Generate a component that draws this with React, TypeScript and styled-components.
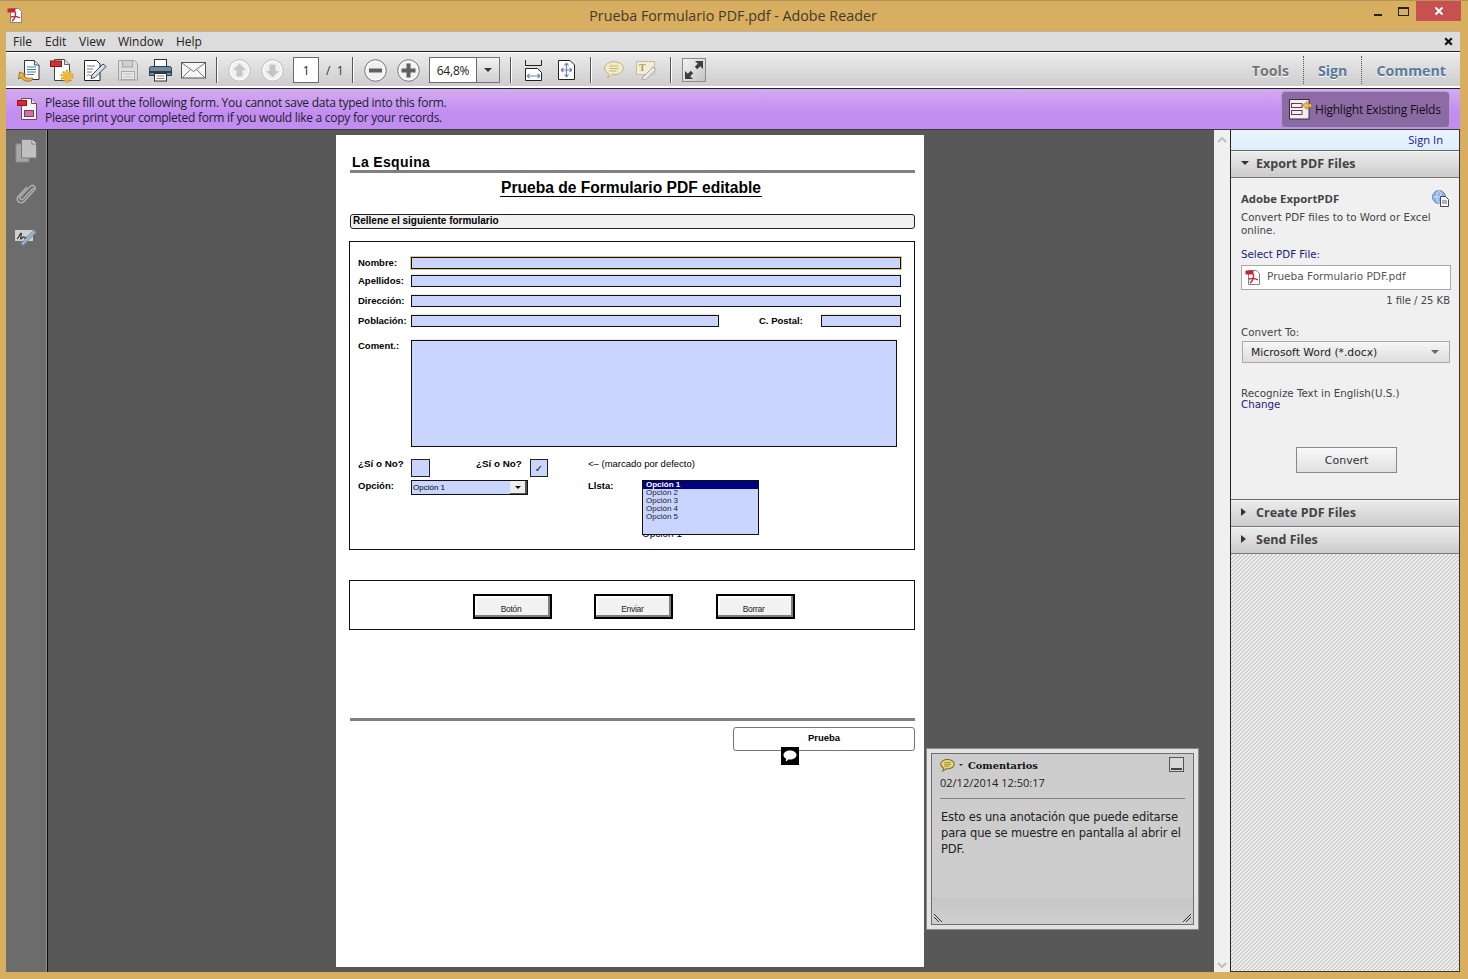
import React from 'react';
import { styled, createGlobalStyle } from 'styled-components';

const ui = `"Open Sans", "Noto Sans", sans-serif`;
const pdf = `"Liberation Sans", Arial, sans-serif`;
const panel = `"DejaVu Sans", Verdana, sans-serif`;

const Global = createGlobalStyle`
    html, body { margin: 0; padding: 0; background: #d8ae60; }
    * { box-sizing: border-box; }
`;

const Win = styled.div`
    width: 1468px;
    height: 979px;
    overflow: hidden;
    display: flex;
    flex-direction: column;
    background: #d8ae60;
    font-family: ${ui};
`;

const TitleBar = styled.div`
    height: 31px;
    flex: none;
    display: grid;
    grid-template-columns: 1fr auto 1fr;
    border-top: 1px solid #b3935a;
    color: #45392a;
    font-size: 14.3px;
`;

const AppIcon = styled.div`
    padding: 6px 0 0 7px;
`;

const Title = styled.div`
    padding: 5px 2px 0 0;
    line-height: 20px;
`;

const WinControls = styled.div`
    display: flex;
    justify-content: flex-end;
    align-items: flex-start;
    padding-right: 7px;
`;

const WinBtn = styled.div<{ $w: number; $red?: boolean }>`
    width: ${(p) => p.$w}px;
    height: 20px;
    display: flex;
    align-items: center;
    justify-content: center;
    background: ${(p) => (p.$red ? '#c75050' : 'transparent')};
`;

const Body = styled.div`
    flex: 1;
    min-height: 0;
    margin: 0 8px 7px 6px;
    display: flex;
    flex-direction: column;
`;

const MenuBar = styled.div`
    height: 20px;
    flex: none;
    background: #dcdcdc;
    border-top: 1px solid #c2b59a;
    display: flex;
    align-items: center;
    padding: 0 7px;
    font-size: 12px;
    color: #222;
`;

const MenuItem = styled.span<{ $w: number }>`
    width: ${(p) => p.$w}px;
`;

const MenuClose = styled.span`
    margin-left: auto;
    display: flex;
`;

const ToolBar = styled.div`
    height: 38px;
    flex: none;
    display: flex;
    align-items: center;
    padding-left: 6px;
    border-top: 1px solid #222;
    border-bottom: 1px solid #222;
    box-shadow: inset 0 1px 0 #fff, inset 0 -2px 0 #fff;
    background: linear-gradient(#ececec, #cbcbcb);
`;

const Slot = styled.div`
    width: 33px;
    height: 26px;
    flex: none;
    display: flex;
    align-items: center;
    justify-content: center;
`;

const Sep = styled.div<{ $l?: number; $r?: number }>`
    width: 1px;
    height: 26px;
    flex: none;
    background: #555;
    box-shadow: 1px 0 0 #fff;
    margin: 0 ${(p) => p.$r ?? 6}px 0 ${(p) => p.$l ?? 6}px;
`;

const NumBox = styled.div<{ $w: number; $l: number }>`
    width: ${(p) => p.$w}px;
    height: 26px;
    margin-left: ${(p) => p.$l}px;
    background: #fff;
    border: 1px solid #6c6c6c;
    display: flex;
    align-items: center;
    justify-content: center;
    font-size: 12px;
    letter-spacing: -0.2px;
    color: #222;
`;

const PageCount = styled.span`
    margin-left: 7px;
    width: 17px;
    font-size: 12px;
    color: #333;
    white-space: nowrap;
`;

const ZoomDrop = styled.div`
    width: 23px;
    height: 26px;
    border: 1px solid #777;
    border-left: 0;
    background: linear-gradient(#f2f2f2, #cfcfcf);
    display: flex;
    align-items: center;
    justify-content: center;
`;

const Caret = styled.span<{ $size?: number; $dir?: 'down' | 'right'; $color?: string }>`
    display: inline-block;
    width: 0;
    height: 0;
    flex: none;
    ${(p) => {
        const s = p.$size ?? 4;
        const c = p.$color ?? '#333';
        return p.$dir === 'right'
            ? `border-top: ${s}px solid transparent; border-bottom: ${s}px solid transparent; border-left: ${s + 1}px solid ${c};`
            : `border-left: ${s}px solid transparent; border-right: ${s}px solid transparent; border-top: ${s}px solid ${c};`;
    }}
`;

const FullBtn = styled.div`
    width: 24px;
    height: 24px;
    margin-left: 5px;
    border: 1px solid #8a8a8a;
    background: linear-gradient(135deg, #f4f4f4, #c4c4c4);
    display: flex;
    align-items: center;
    justify-content: center;
`;

const Tabs = styled.div`
    margin-left: auto;
    height: 28px;
    display: flex;
    align-items: center;
    padding-right: 14px;
`;

const Tab = styled.div<{ $color: string; $first?: boolean }>`
    height: 28px;
    line-height: 29px;
    padding-left: ${(p) => (p.$first ? 0 : 14)}px;
    padding-right: 14px;
    border-left: ${(p) => (p.$first ? 0 : 1)}px dotted #555;
    font-size: 14.2px;
    font-weight: 700;
    color: ${(p) => p.$color};
    text-shadow: 0 1px 0 #fff;
    &:last-child { padding-right: 0; }
`;

const FormBar = styled.div`
    height: 41px;
    flex: none;
    display: flex;
    align-items: center;
    padding: 0 10px 0 11px;
    background: linear-gradient(#d4abf0, #c28df1 60%);
    border-bottom: 1px solid #3c3c3c;
`;

const FormBarText = styled.div`
    margin-left: 6px;
    padding-top: 2px;
    font-size: 12px;
    line-height: 15px;
    color: #1d1d2c;
    letter-spacing: -0.27px;
`;

const HighlightBtn = styled.div`
    margin-left: auto;
    width: 169px;
    height: 37px;
    display: flex;
    align-items: center;
    gap: 3px;
    padding-left: 7px;
    border: 1px solid #b79ad2;
    border-radius: 4px;
    background: linear-gradient(#8f6ba4, #8a6aa4);
    font-size: 12px;
    color: #111;
    white-space: nowrap;
    letter-spacing: -0.22px;
`;

const Main = styled.div`
    flex: 1;
    min-height: 0;
    display: flex;
`;

const Rail = styled.div`
    width: 42px;
    flex: none;
    display: flex;
    flex-direction: column;
    align-items: center;
    gap: 19px;
    padding: 9px 2px 0 0;
    background: #6c6c6c;
    border-right: 1px solid #0c0c0c;
    box-shadow: inset -1px 0 0 #8e8e8e;
`;

const Viewport = styled.div`
    position: relative;
    flex: 1;
    background: #585858;
`;

const Page = styled.div`
    width: 588px;
    height: 832px;
    margin: 5px 0 0 288px;
    padding: 19px 0 0 14px;
    background: #fff;
    color: #000;
    font-family: ${pdf};
`;

const Brand = styled.div`
    height: 16px;
    line-height: 16px;
    padding-left: 2px;
    font-size: 14px;
    font-weight: 700;
    letter-spacing: 0.35px;
`;

const Rule = styled.div<{ $top?: number }>`
    width: 565px;
    height: 3px;
    margin-top: ${(p) => p.$top ?? 0}px;
    background: #808080;
`;

const FormTitleRow = styled.div`
    width: 565px;
    margin-top: 4px;
    text-align: center;
    padding-right: 3px;
`;

const FormTitle = styled.span`
    display: inline-block;
    height: 20px;
    line-height: 21px;
    border-bottom: 1px solid #000;
    padding: 0 1px;
    font-size: 15.6px;
    font-weight: 700;
`;

const Section = styled.div`
    width: 565px;
    height: 15px;
    margin-top: 17px;
    padding-left: 2px;
    border: 1px solid #222;
    border-radius: 3px;
    background: #f0f0f0;
    font-size: 10px;
    font-weight: 700;
    line-height: 12px;
`;

const FormBox = styled.div`
    width: 566px;
    margin: 12px 0 0 -1px;
    padding: 15px 0 14px 8px;
    border: 1px solid #111;
`;

const Row = styled.div<{ $top?: number; $h?: number }>`
    display: flex;
    align-items: center;
    height: ${(p) => p.$h ?? 12}px;
    margin-top: ${(p) => p.$top ?? 0}px;
`;

const TopRow = styled(Row)`
    align-items: flex-start;
`;

const Label = styled.div<{ $w?: number; $l?: number }>`
    width: ${(p) => p.$w ?? 53}px;
    margin-left: ${(p) => p.$l ?? 0}px;
    flex: none;
    font-size: 9.5px;
    font-weight: 700;
    line-height: 12px;
`;

const CheckLabel = styled(Label)`
    margin-top: -1px;
    font-size: 9.8px;
`;

const Field = styled.div<{ $w: number; $h?: number; $focus?: boolean }>`
    width: ${(p) => p.$w}px;
    height: ${(p) => p.$h ?? 12}px;
    flex: none;
    background: #c9d5ff;
    border: 1px solid #111;
    box-shadow: ${(p) => (p.$focus ? '0 0 0 1px #efc27a' : '0 -1px 0 #f7e7cf')};
`;

const Check = styled.div<{ $w: number }>`
    width: ${(p) => p.$w}px;
    height: 18px;
    flex: none;
    background: #c9d5ff;
    border: 1px solid #222;
    display: flex;
    align-items: center;
    justify-content: center;
    font-family: "DejaVu Sans", sans-serif;
    font-size: 10px;
    color: #111;
`;

const Note = styled.div`
    margin: -1px 0 0 40px;
    font-size: 9.5px;
    line-height: 12px;
`;

const Combo = styled.div`
    width: 117px;
    height: 15px;
    flex: none;
    display: flex;
    background: #c9d5ff;
    border: 1px solid #111;
    font-size: 8px;
    line-height: 14px;
    padding-left: 1px;
`;

const ComboText = styled.span`
    flex: 1;
`;

const ComboBtn = styled.span`
    width: 17px;
    background: #eee;
    border-right: 2px solid #555;
    border-bottom: 1px solid #555;
    display: flex;
    align-items: center;
    justify-content: center;
`;

const ListWrap = styled.div`
    position: relative;
    flex: none;
`;

const ListBehind = styled.div`
    position: absolute;
    left: 0;
    top: 49px;
    font-size: 10px;
    line-height: 10px;
    white-space: nowrap;
`;

const ListBox = styled.div`
    position: relative;
    width: 117px;
    height: 55px;
    background: #c9d5ff;
    border: 1px solid #111;
    font-size: 8px;
    line-height: 8px;
`;

const ListItem = styled.div<{ $active?: boolean }>`
    height: 8px;
    padding-left: 3px;
    white-space: nowrap;
    background: ${(p) => (p.$active ? '#000080' : 'transparent')};
    color: ${(p) => (p.$active ? '#fff' : '#222')};
    font-weight: ${(p) => (p.$active ? 700 : 400)};
`;

const ButtonBox = styled.div`
    width: 566px;
    height: 50px;
    margin: 30px 0 0 -1px;
    padding: 13px 0 0 123px;
    border: 1px solid #111;
    display: flex;
    align-items: flex-start;
    gap: 42.3px;
`;

const FormButton = styled.div`
    width: 79px;
    height: 25px;
    padding-right: 3px;
    border: 2px solid #000;
    box-shadow: inset -2px -2px 0 #808080, inset 2px 2px 0 #fff;
    background: #f2f2f2;
    text-align: center;
    font-size: 8.5px;
    letter-spacing: -0.3px;
    line-height: 27px;
    color: #222;
`;

const PruebaBox = styled.div`
    position: relative;
    width: 182px;
    height: 24px;
    margin: 6px 0 0 383px;
    border: 1px solid #777;
    border-radius: 3px;
    text-align: center;
    font-size: 9.5px;
    font-weight: 700;
    line-height: 19px;
`;

const NoteMark = styled.div`
    position: absolute;
    left: 47px;
    top: 19px;
    width: 18px;
    height: 18px;
    background: #000;
    display: flex;
    align-items: center;
    justify-content: center;
`;

const Popup = styled.div`
    position: absolute;
    left: 878px;
    top: 618px;
    width: 273px;
    height: 182px;
    padding: 4px;
    background: #e2e2e2;
    border: 1px solid #8c8c8c;
`;

const PopupInner = styled.div`
    position: relative;
    height: 100%;
    padding: 3px 8px 0 8px;
    background: linear-gradient(#cdcdcd 85%, #c6c6c6 85%, #cfcfcf);
    border: 1px solid #6e6e6e;
    color: #222;
    font-family: ${panel};
`;

const PopupHead = styled.div`
    display: flex;
    align-items: center;
    height: 16px;
    gap: 4px;
`;

const PopupTitle = styled.span`
    margin-left: 1px;
    font-family: "DejaVu Serif", ${panel};
    font-size: 9.8px;
    font-weight: 700;
    color: #111;
`;

const MinBtn = styled.div`
    position: absolute;
    right: 9px;
    top: 3px;
    width: 15px;
    height: 15px;
    border: 1px solid #555;
    background: #d8d8d8;
    display: flex;
    align-items: flex-end;
    justify-content: center;
    padding-bottom: 1px;
    &::after {
        content: '';
        width: 11px;
        height: 2px;
        background: #444;
    }
`;

const PopupDate = styled.div`
    margin-top: 2px;
    font-family: ${ui};
    font-size: 11px;
    line-height: 15px;
    padding-bottom: 8px;
    border-bottom: 1px solid #808080;
`;

const PopupText = styled.div`
    margin: 10px -6px 0 0;
    padding-left: 1px;
    font-size: 11.5px;
    line-height: 16px;
    letter-spacing: -0.15px;
`;

const Grip = styled.svg<{ $side: 'left' | 'right' }>`
    position: absolute;
    bottom: 1px;
    ${(p) => p.$side}: 1px;
`;

const Scroll = styled.div`
    width: 16px;
    flex: none;
    background: #f0f0f0;
    display: flex;
    flex-direction: column;
    justify-content: space-between;
    align-items: center;
    padding: 6px 0 3px;
`;

const Side = styled.div`
    width: 230px;
    flex: none;
    display: flex;
    flex-direction: column;
    border-left: 1px solid #222;
    border-right: 1px solid #333;
    border-bottom: 1px solid #333;
    font-family: ${panel};
    color: #444;
`;

const SignIn = styled.div`
    height: 21px;
    flex: none;
    background: linear-gradient(#eaf4fd, #dfeefb);
    border-bottom: 1px solid #666;
    text-align: right;
    padding-right: 16px;
    font-family: ${ui};
    font-size: 11.2px;
    line-height: 19px;
    color: #1515a0;
`;

const PanelHead = styled.div<{ $gap: number }>`
    height: 27px;
    flex: none;
    display: flex;
    align-items: center;
    gap: ${(p) => p.$gap}px;
    padding: 0 0 2px 10px;
    background: linear-gradient(#ececec, #cccccc);
    border-bottom: 1px solid #777;
    box-shadow: inset 0 1px 0 #f6f6f6;
    font-family: ${ui};
    font-size: 12.5px;
    font-weight: 700;
    color: #444;
`;

const PanelBody = styled.div`
    height: 322px;
    flex: none;
    background: #f0f0f0;
    border-bottom: 1px solid #666;
    padding: 12px 9px 0 10px;
    font-size: 10.3px;
`;

const ExportTitle = styled.div`
    display: flex;
    justify-content: space-between;
    align-items: flex-start;
    height: 18px;
    padding-right: 1px;
    font-family: ${ui};
    font-size: 11.4px;
    font-weight: 700;
    line-height: 17px;
`;

const Desc = styled.div`
    margin-top: 3px;
    line-height: 13px;
    width: 205px;
`;

const SelectLabel = styled.div`
    margin-top: 11px;
    line-height: 13px;
    color: #1b1b80;
`;

const FileBox = styled.div`
    display: flex;
    align-items: flex-start;
    gap: 6px;
    width: 210px;
    height: 25px;
    margin-top: 4px;
    padding: 3px 0 0 3px;
    background: #fff;
    border: 1px solid #aaa;
    font-size: 10.5px;
    line-height: 15px;
    color: #555;
`;

const FileMeta = styled.div`
    margin-top: 3px;
    text-align: right;
    font-size: 10px;
    line-height: 15px;
`;

const ConvertLabel = styled.div`
    margin-top: 17px;
    line-height: 14px;
`;

const Dropdown = styled.div`
    width: 208px;
    height: 22px;
    margin: 2px 0 0 1px;
    display: flex;
    align-items: center;
    justify-content: space-between;
    padding: 0 10px 0 8px;
    border: 1px solid #aaa;
    background: linear-gradient(#f6f6f6, #dedede);
    color: #222;
    font-size: 10.75px;
`;

const Recognize = styled.div`
    margin-top: 25px;
    line-height: 11px;
`;

const ChangeLink = styled.div`
    color: #1b1b80;
    line-height: 11px;
`;

const ConvertBtn = styled.div`
    width: 101px;
    height: 26px;
    margin: 37px 0 0 55px;
    border: 1px solid #888;
    background: linear-gradient(#f8f8f8, #e0e0e0);
    text-align: center;
    line-height: 25px;
    font-size: 11px;
    color: #333;
`;

const Hatch = styled.div`
    flex: 1;
    background: repeating-linear-gradient(135deg, #cfcfcf 0 1.8px, #f0f0f0 1.8px 2.83px);
`;

function PdfIcon() {
    return (
        <svg width="16" height="17" viewBox="0 0 16 17">
            <path d="M3.5 1.5h8l3 3v11h-11z" fill="#fff" stroke="#8a7f7f" />
            <rect x="0.5" y="1.5" width="8" height="4" fill="#c8242c" />
            <path d="M5 14c2-1 4-5 3.5-9M4 10c3-1 6-1 9 1" fill="none" stroke="#c8242c" strokeWidth="1.4" />
        </svg>
    );
}

function OpenIcon() {
    return (
        <svg width="24" height="25" viewBox="0 0 24 25">
            <path d="M7.5 2.500h10l4.500 4.500v14.500h-14.500z" fill="#fff" stroke="#333" />
            <path d="M17.500 2.500v4.500h4.500" fill="#ddd" stroke="#555" />
            <path d="M10 9h9M10 11.500h9M10 14h9M10 16.500h7" stroke="#3b78c2" />
            <path d="M15.500 22c-5 2.500-9.500 1-11-2.500l-3 1.500 1-7 6.500 2.500-2.500 1.200c1.500 2 4.500 3 9 2.300z" fill="#f0b040" stroke="#8a6420" strokeWidth=".8" />
        </svg>
    );
}

function CreateIcon() {
    return (
        <svg width="24" height="25" viewBox="0 0 24 25">
            <path d="M4.500 1.500h10l5 5v16h-15z" fill="#fff" stroke="#444" />
            <path d="M14.500 1.500v5h5" fill="#ddd" stroke="#666" />
            <rect x="0.500" y="3" width="11" height="5.500" fill="#d8302c" stroke="#7a1a18" />
            <circle cx="17" cy="18.500" r="4.500" fill="#eeb73a" />
            <circle cx="17" cy="18.500" r="5.500" fill="none" stroke="#d9a028" strokeWidth="2" strokeDasharray="2 1.450" />
        </svg>
    );
}

function EditIcon() {
    return (
        <svg width="24" height="24" viewBox="0 0 24 24">
            <path d="M1.5 2.5h12l3.5 3.5v16.5h-15.500z" fill="#fff" stroke="#222" />
            <path d="M4 8h8M4 11h6M4 14h5M4 18c2-3 3 1 5-1" fill="none" stroke="#777" />
            <path d="M9 17l11-11 3 2.5-11 11-4 1z" fill="#d7e1ee" stroke="#38465a" />
        </svg>
    );
}

function SaveIcon() {
    return (
        <svg width="20" height="22" viewBox="0 0 20 22">
            <path d="M.5 1.5h16l3 3v16.500h-19z" fill="#dcdcdc" stroke="#a4a4a4" />
            <rect x="4.500" y="1.500" width="10" height="6.500" fill="#cfcfcf" stroke="#a4a4a4" />
            <rect x="3.500" y="12.500" width="13" height="8" fill="#e8e8e8" stroke="#aaa" />
            <path d="M5.500 15h9M5.500 18h9" stroke="#bbb" />
        </svg>
    );
}

function PrintIcon() {
    return (
        <svg width="23" height="24" viewBox="0 0 23 24">
            <rect x="5.500" y="1.500" width="12" height="9" fill="#fff" stroke="#333" />
            <path d="M2.500 8.500h18a2 2 0 0 1 2 2v7h-22v-7a2 2 0 0 1 2-2z" fill="#6f8ba8" stroke="#2e3c4c" />
            <rect x="1" y="13" width="21" height="2" fill="#2e3c4c" />
            <rect x="5.500" y="15.500" width="12" height="7.500" fill="#fff" stroke="#333" />
            <path d="M7.500 18h8M7.500 20.500h8" stroke="#888" />
        </svg>
    );
}

function MailIcon() {
    return (
        <svg width="25" height="17" viewBox="0 0 25 17">
            <rect x=".5" y=".5" width="24" height="15.500" fill="#f6f6f6" stroke="#555" />
            <path d="M1 1l11.500 8.500L24 1M1 16l8.500-8.500M24 16l-8.500-8.500" fill="none" stroke="#777" />
        </svg>
    );
}

function RoundIcon({ kind, dim }: { kind: 'up' | 'down' | 'minus' | 'plus'; dim?: boolean }) {
    const color = dim ? '#c6c6c6' : '#606060';
    const shapes = {
        up: 'M11.500 4.500l6.500 6.500h-3.500v6.500h-6v-6.500h-3.500z',
        down: 'M11.500 18.500l6.500-6.500h-3.500v-6.500h-6v6.500h-3.500z',
        minus: 'M5 9.500h13v4h-13z',
        plus: 'M9.500 4.500h4v5h5v4h-5v5h-4v-5h-5v-4h5z',
    };
    return (
        <svg width="23" height="23" viewBox="0 0 23 23">
            <circle cx="11.500" cy="11.500" r="10.800" fill="#f0f0f0" stroke={dim ? '#c0c0c0' : '#777'} />
            <circle cx="11.500" cy="11.500" r="9" fill="none" stroke="#fff" />
            <path d={shapes[kind]} fill={color} />
        </svg>
    );
}

function FitWidthIcon() {
    return (
        <svg width="17" height="21" viewBox="0 0 17 21">
            <path d="M.5 0v5.500h16V0" fill="none" stroke="#222" />
            <path d="M.5 8.500h12l4 4v8h-16z" fill="#fff" stroke="#222" />
            <path d="M2 16h13M2 16l2.500-2M2 16l2.500 2M15 16l-2.500-2M15 16l-2.500 2" fill="none" stroke="#6f86b4" strokeWidth="1.200" />
        </svg>
    );
}

function FitPageIcon() {
    return (
        <svg width="17" height="20" viewBox="0 0 17 20">
            <path d="M.5.500h11.500l4.500 4.500v14.500h-16z" fill="#fff" stroke="#222" />
            <path d="M8.500 3v14M3 10h11M8.500 3l-2 2.500M8.500 3l2 2.500M8.500 17l-2-2.500M8.500 17l2-2.500M3 10l2.500-2M3 10l2.500 2M14 10l-2.500-2M14 10l-2.500 2" fill="none" stroke="#6f86b4" strokeWidth="1.200" />
        </svg>
    );
}

function BubbleIcon({ w, h, strong }: { w: number; h: number; strong?: boolean }) {
    return (
        <svg width={w} height={h} viewBox="0 0 20 18">
            <path d="M10 .7c5.200 0 9.300 2.900 9.300 6.500s-4.100 6.500-9.300 6.500c-.8 0-1.500 0-2.200-.2-1 1.300-2.500 2.500-4.300 3 .8-1 1.200-2.300 1.200-3.700C2.300 11.600.7 9.600.7 7.200.7 3.600 4.800.7 10 .7z" fill={strong ? '#e8d47c' : '#f2ebc6'} stroke={strong ? '#7e6c22' : '#bcb280'} strokeWidth={strong ? 1.400 : 1} />
            <path d="M5.500 5h9M5.500 7.500h9M5.500 10h7" stroke={strong ? '#8a7628' : '#c2b678'} />
        </svg>
    );
}

function TypewriterIcon() {
    return (
        <svg width="21" height="20" viewBox="0 0 21 20">
            <rect x=".5" y="1.500" width="18" height="13" fill="#f2edd4" stroke="#c2bda4" />
            <text x="3" y="11" fontFamily="Liberation Serif, serif" fontSize="10" fontWeight="700" fill="#ae9e58">T</text>
            <path d="M7 17l10-10 3 2.500-10 10-4 .5z" fill="#e8e8e4" stroke="#a8a8a0" />
        </svg>
    );
}

function FullIcon() {
    return (
        <svg width="20" height="20" viewBox="0 0 20 20">
            <path d="M11 1h8v8l-2.800-2.800-3 3-2.400-2.400 3-3zM9 19H1v-8l2.800 2.800 3-3 2.400 2.400-3 3z" fill="#3f3f3f" />
        </svg>
    );
}

function FormIcon() {
    return (
        <svg width="22" height="24" viewBox="0 0 22 24">
            <path d="M4.500 1.500h10l5 5v16h-15z" fill="#f8f3f6" stroke="#6a4a5a" />
            <path d="M14.500 1.500v5h5" fill="#ddd" stroke="#6a4a5a" />
            <rect x=".5" y="3.500" width="9" height="5" fill="#e0252c" stroke="#8a1a20" />
            <rect x="7.500" y="13.500" width="9" height="6" fill="#cf6fa8" stroke="#7a3a64" />
        </svg>
    );
}

function HighlightIcon() {
    return (
        <svg width="23" height="21" viewBox="0 0 23 21">
            <rect x=".5" y=".5" width="19.500" height="19.500" fill="#f4eef2" stroke="#3a2a3a" />
            <rect x="2.500" y="4.500" width="10.500" height="4" fill="#f4eef2" stroke="#6a3a4a" />
            <rect x="2.500" y="11.500" width="10.500" height="4" fill="#f4eef2" stroke="#6a3a4a" />
            <path d="M13.500 6.500l4.500-4v2.500h4.500v3H18v2.500z" fill="#f2c04a" stroke="#a07820" strokeWidth=".7" />
        </svg>
    );
}

function PagesRail() {
    return (
        <svg width="22" height="24" viewBox="0 0 22 24">
            <path d="M1 5h13v18H1z" fill="#a8a8a8" stroke="#8a8a8a" />
            <path d="M6.500.5h10.500l4.500 4.500v14h-15z" fill="#c0c0c0" stroke="#777" />
            <path d="M17 .5v4.500h4.500" fill="#e8e8e8" stroke="#777" />
        </svg>
    );
}

function ClipRail() {
    return (
        <svg width="22" height="24" viewBox="0 0 22 24">
            <path d="M18 6.500 8 17c-1.800 1.800-4.200-.6-2.500-2.500L15 4.500c3-3 7 .8 4 4L9 19.500c-3.600 3.800-9-1.400-5.500-5.500l8-8.500" fill="none" stroke="#adadad" strokeWidth="1.600" strokeLinecap="round" />
        </svg>
    );
}

function SignRail() {
    return (
        <svg width="24" height="24" viewBox="0 -3 24 24">
            <rect x="1" y="2" width="18" height="11" fill="#d0d0d0" />
            <path d="M3 11c2-1 3-6 4-6s-1 6 0 6 2-3 3-2 1 2 3 0" fill="none" stroke="#333" strokeWidth="1.200" />
            <path d="M7 15.500l2 2 13-13-2.200-2.600z" fill="#9db4cc" stroke="#77899e" />
        </svg>
    );
}

function GlobeIcon() {
    return (
        <svg width="17" height="17" viewBox="0 0 17 17">
            <circle cx="7" cy="7" r="6.500" fill="#8db4e6" stroke="#5e86bc" />
            <path d="M1 7h12M7 .5c-3 3-3 10 0 13M7 .5c3 3 3 10 0 13" fill="none" stroke="#d6e6f8" />
            <path d="M8.500 6.500h5l3 3v7h-8z" fill="#fff" stroke="#445" />
            <path d="M10 11h5M10 13h5" stroke="#667" />
        </svg>
    );
}

function Chevron({ up }: { up?: boolean }) {
    return (
        <svg width="10" height="7" viewBox="0 0 10 7">
            <path d={up ? 'M1 6l4-4 4 4' : 'M1 1l4 4 4-4'} fill="none" stroke="#c0c0c0" strokeWidth="2" />
        </svg>
    );
}

const menus: [string, number][] = [['File', 32], ['Edit', 34], ['View', 39], ['Window', 58], ['Help', 40]];
const options = ['Opción 2', 'Opción 3', 'Opción 4', 'Opción 5'];

export default function App() {
    return (
        <Win>
            <Global />
            <TitleBar>
                <AppIcon><PdfIcon /></AppIcon>
                <Title>Prueba Formulario PDF.pdf - Adobe Reader</Title>
                <WinControls>
                    <WinBtn $w={26}>
                        <svg width="9" height="9" viewBox="0 0 9 9"><rect x="0" y="7" width="8" height="2" fill="#222" /></svg>
                    </WinBtn>
                    <WinBtn $w={25}>
                        <svg width="11" height="9" viewBox="0 0 11 9"><rect x=".5" y=".5" width="10" height="8" fill="none" stroke="#222" /><rect x="0" y="0" width="11" height="2" fill="#222" /></svg>
                    </WinBtn>
                    <WinBtn $w={45} $red>
                        <svg width="10" height="10" viewBox="0 0 10 10"><path d="M1.500 1.500l7 7M8.500 1.500l-7 7" stroke="#fff" strokeWidth="2" /></svg>
                    </WinBtn>
                </WinControls>
            </TitleBar>
            <Body>
                <MenuBar>
                    {menus.map(([m, w]) => <MenuItem key={m} $w={w}>{m}</MenuItem>)}
                    <MenuClose>
                        <svg width="9" height="9" viewBox="0 0 9 9"><path d="M1.200 1.200l6.600 6.600M7.800 1.200l-6.600 6.600" stroke="#111" strokeWidth="2.200" /></svg>
                    </MenuClose>
                </MenuBar>
                <ToolBar>
                    <Slot><OpenIcon /></Slot>
                    <Slot><CreateIcon /></Slot>
                    <Slot><EditIcon /></Slot>
                    <Slot><SaveIcon /></Slot>
                    <Slot><PrintIcon /></Slot>
                    <Slot><MailIcon /></Slot>
                    <Sep />
                    <Slot><RoundIcon kind="up" dim /></Slot>
                    <Slot><RoundIcon kind="down" dim /></Slot>
                    <NumBox $w={26} $l={4}>1</NumBox>
                    <PageCount>/&nbsp;&nbsp;1</PageCount>
                    <Sep $l={9} />
                    <Slot><RoundIcon kind="minus" /></Slot>
                    <Slot><RoundIcon kind="plus" /></Slot>
                    <NumBox $w={48} $l={4}>64,8%</NumBox>
                    <ZoomDrop><Caret /></ZoomDrop>
                    <Sep $l={10} />
                    <Slot><FitWidthIcon /></Slot>
                    <Slot><FitPageIcon /></Slot>
                    <Sep $l={7} />
                    <Slot><BubbleIcon w={20} h={18} /></Slot>
                    <Slot><TypewriterIcon /></Slot>
                    <Sep $l={7} />
                    <FullBtn><FullIcon /></FullBtn>
                    <Tabs>
                        <Tab $color="#757575" $first>Tools</Tab>
                        <Tab $color="#5a7a9c">Sign</Tab>
                        <Tab $color="#5a7a9c">Comment</Tab>
                    </Tabs>
                </ToolBar>
                <FormBar>
                    <FormIcon />
                    <FormBarText>
                        Please fill out the following form. You cannot save data typed into this form.<br />
                        Please print your completed form if you would like a copy for your records.
                    </FormBarText>
                    <HighlightBtn><HighlightIcon />Highlight Existing Fields</HighlightBtn>
                </FormBar>
                <Main>
                    <Rail>
                        <PagesRail />
                        <ClipRail />
                        <SignRail />
                    </Rail>
                    <Viewport>
                        <Page>
                            <Brand>La Esquina</Brand>
                            <Rule />
                            <FormTitleRow><FormTitle>Prueba de Formulario PDF editable</FormTitle></FormTitleRow>
                            <Section>Rellene el siguiente formulario</Section>
                            <FormBox>
                                <Row><Label>Nombre:</Label><Field $w={490} $focus /></Row>
                                <Row $top={6}><Label>Apellidos:</Label><Field $w={490} /></Row>
                                <Row $top={8}><Label>Dirección:</Label><Field $w={490} /></Row>
                                <Row $top={8}>
                                    <Label>Población:</Label>
                                    <Field $w={308} />
                                    <Label $w={62} $l={40}>C. Postal:</Label>
                                    <Field $w={80} />
                                </Row>
                                <TopRow $top={13} $h={107}>
                                    <Label>Coment.:</Label>
                                    <Field $w={486} $h={107} />
                                </TopRow>
                                <TopRow $top={12} $h={18}>
                                    <CheckLabel>¿Sí o No?</CheckLabel>
                                    <Check $w={19} />
                                    <CheckLabel $w={54} $l={46}>¿Sí o No?</CheckLabel>
                                    <Check $w={18}>✓</Check>
                                    <Note>&lt;– (marcado por defecto)</Note>
                                </TopRow>
                                <TopRow $top={3} $h={55}>
                                    <Label>Opción:</Label>
                                    <Combo>
                                        <ComboText>Opción 1</ComboText>
                                        <ComboBtn><Caret $size={3} $color="#111" /></ComboBtn>
                                    </Combo>
                                    <Label $w={54} $l={60}>Llsta:</Label>
                                    <ListWrap>
                                        <ListBehind>Opción 1</ListBehind>
                                        <ListBox>
                                            <ListItem $active>Opción 1</ListItem>
                                            {options.map((o) => <ListItem key={o}>{o}</ListItem>)}
                                        </ListBox>
                                    </ListWrap>
                                </TopRow>
                            </FormBox>
                            <ButtonBox>
                                <FormButton>Botón</FormButton>
                                <FormButton>Enviar</FormButton>
                                <FormButton>Borrar</FormButton>
                            </ButtonBox>
                            <Rule $top={88} />
                            <PruebaBox>
                                Prueba
                                <NoteMark>
                                    <svg width="14" height="12" viewBox="0 0 14 12">
                                        <path d="M7 .5c3.500 0 6.500 2 6.500 4.500S10.500 9.500 7 9.500c-.6 0-1.100 0-1.600-.1-.8.9-1.800 1.600-3 2 .5-.8.800-1.600.8-2.600C1.500 8 .5 6.600.5 5 .5 2.500 3.500.5 7 .5z" fill="#fff" />
                                    </svg>
                                </NoteMark>
                            </PruebaBox>
                        </Page>
                        <Popup>
                            <PopupInner>
                                <PopupHead>
                                    <BubbleIcon w={15} h={13} strong />
                                    <Caret $size={2.500} $color="#333" />
                                    <PopupTitle>Comentarios</PopupTitle>
                                </PopupHead>
                                <MinBtn />
                                <PopupDate>02/12/2014 12:50:17</PopupDate>
                                <PopupText>
                                    Esto es una anotación que puede editarse para que se muestre en pantalla al abrir el PDF.
                                </PopupText>
                                <Grip $side="left" width="10" height="10" viewBox="0 0 10 10">
                                    <path d="M1 1l8 8M1 4l5 5" stroke="#333" />
                                </Grip>
                                <Grip $side="right" width="10" height="10" viewBox="0 0 10 10">
                                    <path d="M9 1l-8 8M9 4l-5 5" stroke="#333" />
                                </Grip>
                            </PopupInner>
                        </Popup>
                    </Viewport>
                    <Scroll>
                        <Chevron up />
                        <Chevron />
                    </Scroll>
                    <Side>
                        <SignIn>Sign In</SignIn>
                        <PanelHead $gap={7}><Caret />Export PDF Files</PanelHead>
                        <PanelBody>
                            <ExportTitle>Adobe ExportPDF<GlobeIcon /></ExportTitle>
                            <Desc>Convert PDF files to to Word or Excel online.</Desc>
                            <SelectLabel>Select PDF File:</SelectLabel>
                            <FileBox><PdfIcon />Prueba Formulario PDF.pdf</FileBox>
                            <FileMeta>1 file / 25 KB</FileMeta>
                            <ConvertLabel>Convert To:</ConvertLabel>
                            <Dropdown>Microsoft Word (*.docx)<Caret $color="#666" /></Dropdown>
                            <Recognize>Recognize Text in English(U.S.)</Recognize>
                            <ChangeLink>Change</ChangeLink>
                            <ConvertBtn>Convert</ConvertBtn>
                        </PanelBody>
                        <PanelHead $gap={10}><Caret $dir="right" $size={4} />Create PDF Files</PanelHead>
                        <PanelHead $gap={10}><Caret $dir="right" $size={4} />Send Files</PanelHead>
                        <Hatch />
                    </Side>
                </Main>
            </Body>
        </Win>
    );
}
